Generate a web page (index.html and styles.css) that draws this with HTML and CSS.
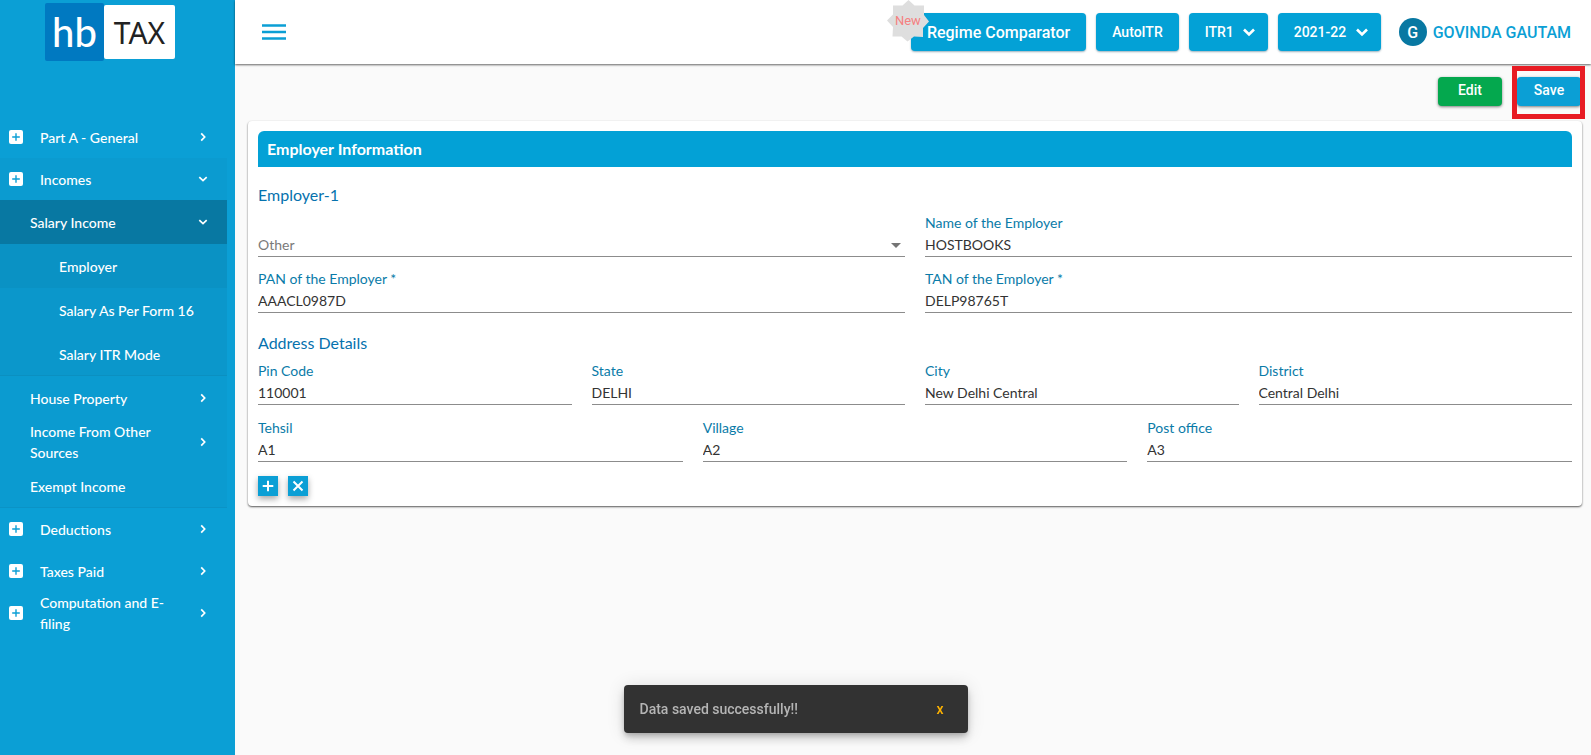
FILE: index.html
```html
<!DOCTYPE html>
<html lang="en">
<head>
<meta charset="utf-8">
<title>hb TAX - Employer Information</title>
<meta name="viewport" content="width=device-width, initial-scale=1">
<link rel="stylesheet" href="styles.css">
</head>
<body>
<svg width="0" height="0" class="sprite" aria-hidden="true">
  <symbol id="plus-box" viewBox="0 0 14 14"><rect width="14" height="14" rx="2" fill="currentColor"/><path d="M7 3.200v7.600M3.200 7h7.600" stroke="#0b9fd5" stroke-width="1.400" fill="none"/></symbol>
  <symbol id="right" viewBox="0 0 10 10"><path d="M3.200 1.300 6.700 5 3.200 8.700" stroke="currentColor" stroke-width="1.700" fill="none"/></symbol>
  <symbol id="down" viewBox="0 0 10 10"><path d="M1.300 3.200 5 6.700 8.700 3.200" stroke="currentColor" stroke-width="1.700" fill="none"/></symbol>
  <symbol id="chevron" viewBox="0 0 14 10"><path d="M2 2.500 7 7.500l5-5" stroke="currentColor" stroke-width="2.600" fill="none"/></symbol>
</svg>
<div class="app">
  <aside class="sidebar">
    <a class="logo" href="#"><span class="logo-hb">hb</span><span class="logo-tax">TAX</span></a>
    <nav class="nav">
      <a class="nav-item" href="#"><svg class="plus"><use href="#plus-box"/></svg><span>Part A - General</span><svg class="arrow"><use href="#right"/></svg></a>
      <a class="nav-item open" href="#"><svg class="plus"><use href="#plus-box"/></svg><span>Incomes</span><svg class="arrow"><use href="#down"/></svg></a>
      <div class="submenu">
        <a class="sub-item active" href="#"><span>Salary Income</span><svg class="arrow"><use href="#down"/></svg></a>
        <div class="leafmenu">
          <a class="leaf current" href="#">Employer</a>
          <a class="leaf" href="#">Salary As Per Form 16</a>
          <a class="leaf" href="#">Salary ITR Mode</a>
        </div>
        <a class="sub-item" href="#"><span>House Property</span><svg class="arrow"><use href="#right"/></svg></a>
        <a class="sub-item" href="#"><span>Income From Other Sources</span><svg class="arrow"><use href="#right"/></svg></a>
        <a class="sub-item" href="#"><span>Exempt Income</span></a>
      </div>
      <a class="nav-item" href="#"><svg class="plus"><use href="#plus-box"/></svg><span>Deductions</span><svg class="arrow"><use href="#right"/></svg></a>
      <a class="nav-item" href="#"><svg class="plus"><use href="#plus-box"/></svg><span>Taxes Paid</span><svg class="arrow"><use href="#right"/></svg></a>
      <a class="nav-item" href="#"><svg class="plus"><use href="#plus-box"/></svg><span>Computation and E-filing</span><svg class="arrow"><use href="#right"/></svg></a>
    </nav>
  </aside>
  <div class="content">
    <header class="topbar">
      <button class="menu" type="button" aria-label="Toggle menu"><svg width="24" height="16" viewBox="0 0 24 16"><path d="M0 1.500h24M0 8h24M0 14.500h24" stroke="#0b9fd5" stroke-width="2.600"/></svg></button>
      <div class="tools">
        <button class="tool regime" type="button">Regime Comparator
          <span class="badge"><svg width="42" height="42" viewBox="0 0 42 42" aria-hidden="true"><path d="M21.500 0 27.500 5.500H37V15l5 6.500-6 6.500v9l-9-.5-6.500 5-6-5H5.500L6 27l-6-6.500L6 14.500V5.500h9.500z" fill="#dedede"/></svg><span class="badge-text">New</span></span>
        </button>
        <button class="tool" type="button">AutoITR</button>
        <div class="picker"><select class="tool pick-itr" aria-label="ITR form"><option>ITR1</option></select><svg class="chev"><use href="#chevron"/></svg></div>
        <div class="picker"><select class="tool pick-year" aria-label="Assessment year"><option>2021-22</option></select><svg class="chev"><use href="#chevron"/></svg></div>
        <a class="user" href="#"><span class="avatar">G</span><span>GOVINDA GAUTAM</span></a>
      </div>
    </header>
    <main class="main">
      <div class="actions">
        <button class="action edit" type="button">Edit</button>
        <span class="marked"><button class="action save" type="button">Save</button></span>
      </div>
      <form class="card">
        <h1 class="card-title">Employer Information</h1>
        <h2 class="section">Employer-1</h2>
        <div class="row two">
          <div class="field"><span class="label"></span><div class="select-wrap"><select class="value other" aria-label="Employer type"><option>Other</option></select><svg class="caret" viewBox="0 0 10 5"><path d="M0 0h10L5 5z" fill="#757575"/></svg></div></div>
          <div class="field"><label class="label" for="name">Name of the Employer</label><input class="value" id="name" value="HOSTBOOKS"></div>
        </div>
        <div class="row two">
          <div class="field"><label class="label" for="pan">PAN of the Employer *</label><input class="value" id="pan" value="AAACL0987D"></div>
          <div class="field"><label class="label" for="tan">TAN of the Employer *</label><input class="value" id="tan" value="DELP98765T"></div>
        </div>
        <h2 class="section address">Address Details</h2>
        <div class="row four">
          <div class="field"><label class="label" for="pin">Pin Code</label><input class="value" id="pin" value="110001"></div>
          <div class="field"><label class="label" for="state">State</label><input class="value" id="state" value="DELHI"></div>
          <div class="field"><label class="label" for="city">City</label><input class="value" id="city" value="New Delhi Central"></div>
          <div class="field"><label class="label" for="district">District</label><input class="value" id="district" value="Central Delhi"></div>
        </div>
        <div class="row three">
          <div class="field"><label class="label" for="tehsil">Tehsil</label><input class="value" id="tehsil" value="A1"></div>
          <div class="field"><label class="label" for="village">Village</label><input class="value" id="village" value="A2"></div>
          <div class="field"><label class="label" for="post">Post office</label><input class="value" id="post" value="A3"></div>
        </div>
        <div class="row-buttons">
          <button class="square" type="button" aria-label="Add"><svg width="12" height="12" viewBox="0 0 12 12"><path d="M6 .7v10.600M.7 6h10.600" stroke="#fff" stroke-width="2"/></svg></button>
          <button class="square" type="button" aria-label="Remove"><svg width="12" height="12" viewBox="0 0 12 12"><path d="m1.500 1.500 9 9M10.500 1.500l-9 9" stroke="#fff" stroke-width="2"/></svg></button>
        </div>
      </form>
    </main>
  </div>
</div>
<div class="toast" role="status"><span>Data saved successfully!!</span><button class="toast-close" type="button">x</button></div>
</body>
</html>
```
FILE: styles.css
```css
* { box-sizing: border-box; }
body { margin: 0; background: #fafafa; font-family: Lato, "Liberation Sans", sans-serif; font-size: 14px; }
a { color: inherit; text-decoration: none; }
button, select, input { font: inherit; margin: 0; border: 0; cursor: pointer; }
.sprite { position: absolute; }
.app { display: flex; min-height: 100vh; }

.sidebar { flex: none; width: 235px; background: #0b9fd5; color: #fff; }
.logo { display: flex; align-items: center; height: 64px; padding-left: 45px; }
.logo-hb, .logo-tax { display: flex; align-items: center; justify-content: center; border-radius: 2px; }
.logo-hb { width: 59px; height: 58px; background: #0079c1; font-size: 40px; line-height: 40px; font-weight: 500; }
.logo-tax { width: 71px; height: 54px; background: #fff; color: #222; font-family: "Noto Sans", sans-serif; font-size: 30px; }
.nav { margin-top: 52px; width: 227px; font-weight: 500; line-height: 21px; }
.nav-item, .sub-item { display: flex; align-items: center; padding-right: 19px; }
.nav-item { height: 42px; padding-left: 9px; }
.nav-item span { width: 134px; margin-left: 17px; }
.open { background: #0b9bd0; }
.plus { flex: none; width: 14px; height: 14px; }
.arrow { flex: none; width: 10px; height: 10px; margin-left: auto; }
.submenu { background: #0b9bd0; box-shadow: inset 0 -1px #0b93c6; }
.sub-item { height: 44px; padding-left: 30px; }
.sub-item span { width: 134px; }
.active { background: #0878a2; }
.leafmenu { background: #0b97cb; box-shadow: inset 0 -1px #0b90c1; }
.leaf { display: flex; align-items: center; height: 44px; padding-left: 59px; }
.current { background: #0a92c4; }

.content { flex: 1; min-width: 0; }
.topbar { display: flex; align-items: center; justify-content: space-between; height: 64px; padding: 0 20px 0 27px; background: #fff; box-shadow: 0 1px 2px rgba(0, 0, 0, .6); font-family: Roboto, sans-serif; font-weight: 500; }
.menu { display: flex; padding: 0; background: none; }
.tools { display: flex; align-items: center; gap: 10px; }
.tool { height: 38px; padding: 0 16px; border-radius: 4px; background: #03a1d6; color: #fff; box-shadow: 0 1px 2px rgba(0, 60, 90, .4); }
.regime { position: relative; font-size: 16px; }
.badge { position: absolute; left: -24px; top: -13px; width: 42px; height: 42px; }
.badge-text { position: absolute; inset: 0; line-height: 41px; text-align: center; font-size: 13px; font-weight: 400; color: #f58080; }
.picker, .select-wrap { position: relative; }
.tool.pick-itr, .tool.pick-year { appearance: none; display: block; }
.pick-itr { width: 79px; }
.pick-year { width: 103px; }
.chev { position: absolute; right: 12px; top: 14px; width: 14px; height: 10px; color: #fff; pointer-events: none; }
.user { display: flex; align-items: center; gap: 6px; margin-left: 8px; color: #0b9fd5; font-size: 16px; }
.avatar { display: flex; align-items: center; justify-content: center; width: 28px; height: 28px; border-radius: 50%; background: #0878a2; color: #fff; }

.main { padding: 13px 9px 20px 13px; }
.actions { display: flex; justify-content: flex-end; gap: 15px; padding-right: 1px; }
.action { display: block; width: 64px; height: 29px; padding: 0 0 3px; border-radius: 4px; color: #fff; font-family: Roboto, sans-serif; font-weight: 500; box-shadow: 0 1px 3px rgba(0, 0, 0, .5); }
.edit { background: #04a84e; }
.save { background: #0b9fd5; }
.marked { position: relative; }
.marked::after { content: ""; position: absolute; inset: -11px -4px -13px -5px; border: 5px solid #e81c24; pointer-events: none; }

.card { margin-top: 15px; padding: 10px; border-radius: 4px; background: #fff; box-shadow: 0 1px 2px rgba(0, 0, 0, .65); }
.card-title { margin: 0; padding: 0 9px; border-radius: 6px 6px 0 0; background: #03a1d6; color: #fff; font-size: 16px; line-height: 36px; font-weight: 700; }
.section { margin: 17px 0 6px; color: #0672ae; font-size: 16px; line-height: 22px; font-weight: 400; }
.address { margin-top: 19px; }
.row { display: grid; gap: 20px; }
.row + .row { margin-top: 11px; }
.row + .three { margin-top: 12px; }
.two { grid-template-columns: repeat(2, 1fr); }
.three { grid-template-columns: repeat(3, 1fr); }
.four { grid-template-columns: repeat(4, 1fr); }
.field { min-width: 0; border-bottom: 1px solid #8c8c8c; }
.label { display: block; height: 22px; line-height: 22px; color: #0a7ba8; }
.value { display: block; width: 100%; height: 22px; padding: 0 0 2px; background: none; color: #333; outline: 0; }
.other { appearance: none; color: #7a7a7a; }
.caret { position: absolute; right: 4px; top: 9px; width: 10px; height: 5px; pointer-events: none; }
.row-buttons { display: flex; gap: 10px; margin-top: 14px; }
.square { display: flex; align-items: center; justify-content: center; width: 20px; height: 20px; padding: 0; background: #0b9fd5; box-shadow: 0 3px 6px rgba(0, 0, 0, .35); }

.toast { position: fixed; left: 50%; bottom: 22px; transform: translateX(-50%); display: flex; align-items: center; justify-content: space-between; width: 344px; height: 48px; padding: 0 24px 1px 16px; border-radius: 4px; background: #323232; color: #b5b5b5; font-family: Roboto, sans-serif; font-weight: 500; box-shadow: 0 3px 5px -1px rgba(0, 0, 0, .2), 0 6px 10px rgba(0, 0, 0, .14), 0 1px 18px rgba(0, 0, 0, .12); }
.toast-close { padding: 0; background: none; color: #ffb300; }
```
